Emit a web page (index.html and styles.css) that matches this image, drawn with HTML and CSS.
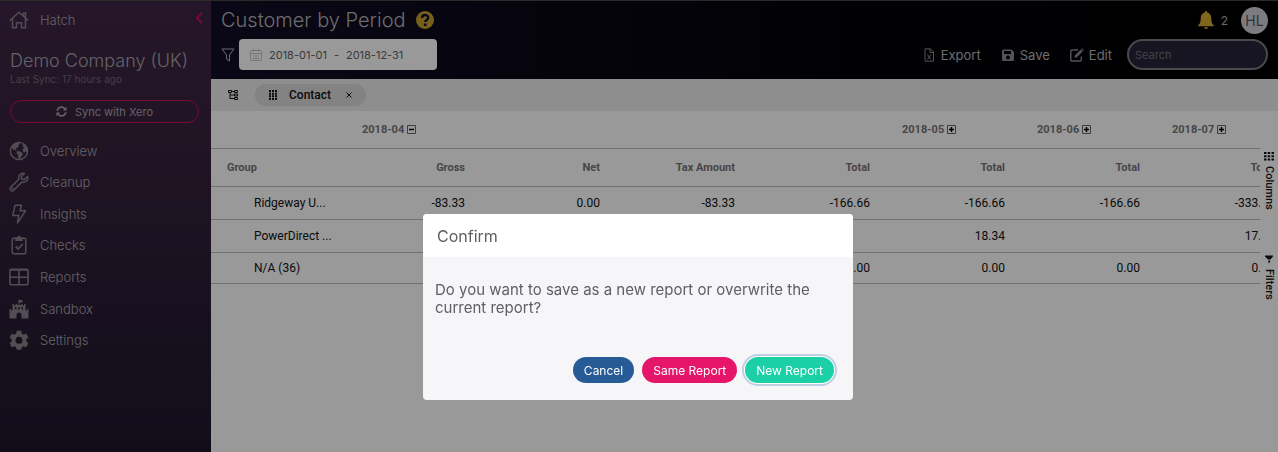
FILE: index.html
```html
<!DOCTYPE html>
<html lang="en">
<head>
<meta charset="utf-8">
<title>Customer by Period</title>
<link rel="stylesheet" href="styles.css">
</head>
<body>
<div class="app">
  <aside class="sidebar">
    <div class="brand">
      <a class="nav-link" href="#">
        <svg class="nav-icon" viewBox="0 0 20 18" fill="none" stroke="currentColor" stroke-width="1.5"><path d="M.8 9.5 10 1.2l9.2 8.3M3.5 7.5v9.3h4v-5h5v5h4V7.500M14.500 4.500V2h2v4.500"/></svg>
        <span>Hatch</span>
      </a>
      <button class="collapse" aria-label="Collapse menu"><svg viewBox="0 0 8 12" fill="none" stroke="currentColor" stroke-width="2"><path d="M6.800 1 2 6l4.800 5"/></svg></button>
    </div>
    <div class="company">
      <h2>Demo Company (UK)</h2>
      <p>Last Sync: 17 hours ago</p>
      <button class="sync"><svg viewBox="0 0 12 12" fill="none" stroke="currentColor" stroke-width="1.800"><path d="M1.300 5A4.700 4.700 0 0 1 9.600 3M10.700 7A4.700 4.700 0 0 1 2.400 9"/><path d="M11.500.8v4h-4zM.5 11.200v-4h4z" fill="currentColor" stroke="none"/></svg>Sync with Xero</button>
    </div>
    <nav class="nav">
      <a class="nav-link" href="#"><svg class="nav-icon" viewBox="0 0 20 20"><circle cx="10" cy="10" r="8.600" fill="none" stroke="currentColor" stroke-width="1.400"/><path fill="currentColor" d="M3 5 6 2l5-.8-.5 2.300-1.500 1 .8 1.200L7.500 7 6 8l2 .8-1 .7-2.500-1L2 6.500zM8 10l3.500.4 2.500 2-1.500 3-2 2.600-1.200-.5-.4-3.500L7.500 12zM13 3l3 1.500L18.500 8l-.5 3-2-.5-.8 1.500-1.700-2.500.5-2 1.500-1-1.500-1z"/></svg><span>Overview</span></a>
      <a class="nav-link" href="#"><svg class="nav-icon" viewBox="0 0 20 20" fill="none" stroke="currentColor" stroke-width="1.500" stroke-linejoin="round"><path d="M18.500 4.500 15.500 7.500 12.700 7.200 12.400 4.500 15.400 1.500C12.500.5 9 3 9.800 7.300L1.700 15.200C0 17.500 2.700 20 4.800 18.300L12.700 10.200C17 11 19.700 7.500 18.500 4.500Z"/><circle cx="3.700" cy="16.400" r=".4"/></svg><span>Cleanup</span></a>
      <a class="nav-link" href="#"><svg class="nav-icon" viewBox="0 0 20 20" fill="none" stroke="currentColor" stroke-width="1.500" stroke-linejoin="round"><path d="M6 1.200h6.500L11 6.800h5.500L8.500 18.800 9.800 11.500H3.800z"/></svg><span>Insights</span></a>
      <a class="nav-link" href="#"><svg class="nav-icon" viewBox="0 0 20 20" fill="none" stroke="currentColor" stroke-width="1.500"><rect x="3.200" y="3.200" width="13.600" height="15.600" rx="1.500"/><path d="m6.700 11.500 2.500 2.500 4.500-5" stroke-width="1.800"/><path d="M6.300 2.500h2A1.700 1.700 0 0 1 11.700 2.500h2V6H6.300z" fill="currentColor" stroke="none"/></svg><span>Checks</span></a>
      <a class="nav-link" href="#"><svg class="nav-icon" viewBox="0 0 20 20" fill="none" stroke="currentColor" stroke-width="1.600"><rect x=".9" y="2.200" width="18.200" height="15.600" rx="1.500"/><path d="M1 3h18M1 10.300h18M10 3v14.500"/></svg><span>Reports</span></a>
      <a class="nav-link" href="#"><svg class="nav-icon" viewBox="0 0 20 20" fill="currentColor"><path fill-rule="evenodd" d="M9.400.5H10V1h3.500v2.500H10.300V6H12V5h1.500v1.500H15V5h1.500v6.500H18V10h1.500v9.500h-7V16a2.500 2.500 0 0 0-5 0v3.500h-7V10H2v1.500h1.500V5H5v1.500h1.500V5H8v1h1.400zM6 8v2.500h1.400V8zM12.600 8v2.500H14V8zM9.300 8v2.500h1.400V8z"/></svg><span>Sandbox</span></a>
      <a class="nav-link" href="#"><svg class="nav-icon" viewBox="0 0 24 24" fill="currentColor"><path fill-rule="evenodd" d="M9.300 1h5.400l.7 3.400 1.900 1.100 3.300-1.100 2.700 4.700L20.700 11.400v2.200l2.600 2.300-2.700 4.700-3.300-1.100-1.900 1.100-.7 3.200H9.300l-.7-3.200-1.900-1.100-3.300 1.100L.7 15.900l2.600-2.300v-2.200L.7 9.100l2.700-4.700 3.300 1.100 1.900-1.100zM12 8.200a4.200 4.200 0 1 0 0 8.400 4.200 4.200 0 0 0 0-8.400z"/></svg><span>Settings</span></a>
    </nav>
  </aside>

  <main class="main">
    <header class="header">
      <div class="title-row">
        <h1>Customer by Period</h1>
        <button class="help" aria-label="Help"><svg viewBox="0 0 18 18"><circle cx="9" cy="9" r="9" fill="currentColor"/><path d="M6 7c0-4 6.200-4 6.200-.3C12.200 9 9.200 9 9.200 11" fill="none" stroke="#120e26" stroke-width="2.400"/><circle cx="9.200" cy="13.700" r="1.500" fill="#120e26"/></svg></button>
        <div class="account">
          <svg class="bell" viewBox="0 0 16 18" fill="currentColor"><path d="M8 0a1.200 1.200 0 0 1 1.200 1.400C12 2 13.300 4.200 13.300 7c0 4.500 1 6 2.700 7.500v.8H0v-.8C1.700 13 2.700 11.500 2.700 7c0-2.800 1.300-5 4.100-5.600A1.200 1.200 0 0 1 8 0zM6 16.300h4a2 1.700 0 0 1-4 0z"/></svg>
          <span class="count">2</span>
          <span class="avatar">HL</span>
        </div>
      </div>
      <div class="tool-row">
        <svg class="funnel" viewBox="0 0 14 14" fill="none" stroke="currentColor"><path d="M1 1h12L8.500 7v6l-3-2V7z"/></svg>
        <button class="dates"><svg viewBox="0 0 12 12" fill="none" stroke="currentColor"><rect x=".5" y="1.500" width="11" height="10" rx="1"/><path d="M.5 4.500h11M3.500 0v2.500M8.500 0v2.500M3 7h6M3 9.500h6" /></svg><span>2018-01-01</span><span>-</span><span>2018-12-31</span></button>
        <div class="actions">
          <button class="action"><svg viewBox="0 0 14 14" fill="none" stroke="currentColor"><path d="M3 .8h5.500L11.500 4v9.200H3zM8 1v3.500h3.500M5.500 6.500l3.300 5M8.800 6.500l-3.300 5"/></svg>Export</button>
          <button class="action"><svg viewBox="0 0 14 14" fill="currentColor"><path fill-rule="evenodd" d="M2.500 1.500h8l2.500 2.500v7.500a1.500 1.500 0 0 1-1.500 1.500h-9A1.500 1.500 0 0 1 1 11.500V3a1.500 1.500 0 0 1 1.500-1.500zM3 3v3h7V3zM7 7.500a2 2 0 1 0 0 4 2 2 0 0 0 0-4z"/></svg>Save</button>
          <button class="action"><svg viewBox="0 0 14 14" fill="none" stroke="currentColor" stroke-width="1.400"><path d="M8 2H1.800A1 1 0 0 0 .8 3v9a1 1 0 0 0 1 1h8.500a1 1 0 0 0 1-1V8.500"/><path d="m5 7.200 5.700-5.700 2 2L7 9.200l-2.500.5zM11.200 1 12 .2l2 2-.8.8z" fill="currentColor" stroke="none"/></svg>Edit</button>
          <input class="search" type="search" placeholder="Search" aria-label="Search">
        </div>
      </div>
    </header>

    <div class="grid">
      <div class="group-bar">
        <svg class="tree" viewBox="0 0 10 10" fill="none" stroke="currentColor"><path d="M.5.5h3v2h-3zM6.500.5h3v2h-3zM6.500 4h3v2h-3zM6.500 7.500h3v2h-3zM2 2.500v6h4.500M2 5h4.500M3.500 1.500h3"/></svg>
        <div class="chip">
          <svg class="grip" viewBox="0 0 8 10" fill="currentColor"><path d="M0 0h2v2H0zM3 0h2v2H3zM6 0h2v2H6zM0 2.700h2v2H0zM3 2.700h2v2H3zM6 2.700h2v2H6zM0 5.300h2v2H0zM3 5.300h2v2H3zM6 5.300h2v2H6zM0 8h2v2H0zM3 8h2v2H3zM6 8h2v2H6z"/></svg>
          <span>Contact</span>
          <button class="remove" aria-label="Remove Contact"><svg viewBox="0 0 6 6" stroke="currentColor"><path d="m.5.5 5 5m0-5-5 5"/></svg></button>
        </div>
      </div>
      <div class="grid-body">
        <div class="table-wrap">
          <table>
            <thead>
              <tr class="months">
                <th></th>
                <th colspan="4">2018-04 <button class="toggle" aria-label="Collapse 2018-04"><svg viewBox="0 0 9 9"><path d="M.5.5h8v8h-8z" fill="none" stroke="currentColor"/><path d="M2 4.500h5" stroke="#000" stroke-width="1.500"/></svg></button></th>
                <th>2018-05 <button class="toggle" aria-label="Expand 2018-05"><svg viewBox="0 0 9 9"><path d="M.5.5h8v8h-8z" fill="none" stroke="currentColor"/><path d="M2 4.500h5M4.500 2v5" stroke="#000" stroke-width="1.500"/></svg></button></th>
                <th>2018-06 <button class="toggle" aria-label="Expand 2018-06"><svg viewBox="0 0 9 9"><path d="M.5.5h8v8h-8z" fill="none" stroke="currentColor"/><path d="M2 4.500h5M4.500 2v5" stroke="#000" stroke-width="1.500"/></svg></button></th>
                <th>2018-07 <button class="toggle" aria-label="Expand 2018-07"><svg viewBox="0 0 9 9"><path d="M.5.5h8v8h-8z" fill="none" stroke="currentColor"/><path d="M2 4.500h5M4.500 2v5" stroke="#000" stroke-width="1.500"/></svg></button></th>
              </tr>
              <tr class="fields"><th>Group</th><th>Gross</th><th>Net</th><th>Tax Amount</th><th>Total</th><th>Total</th><th>Total</th><th>Total</th></tr>
            </thead>
            <tbody>
              <tr><td>Ridgeway U...</td><td>-83.33</td><td>0.00</td><td>-83.33</td><td>-166.66</td><td>-166.66</td><td>-166.66</td><td>-333.32</td></tr>
              <tr><td>PowerDirect ...</td><td></td><td></td><td></td><td></td><td>18.34</td><td></td><td>17.47</td></tr>
              <tr><td>N/A (36)</td><td>0.00</td><td>0.00</td><td>0.00</td><td>0.00</td><td>0.00</td><td>0.00</td><td>0.00</td></tr>
            </tbody>
          </table>
        </div>
        <div class="side-tabs">
          <button class="side-tab"><svg viewBox="0 0 10 10" fill="currentColor"><path d="M0 1h2.500v2H0zM3.700 1h2.500v2H3.700zM7.500 1H10v2H7.500zM0 4.200h2.500v2H0zM3.700 4.200h2.500v2H3.700zM7.500 4.200H10v2H7.500zM0 7.500h2.500v2H0zM3.700 7.500h2.500v2H3.700zM7.500 7.500H10v2H7.500z"/></svg>Columns</button>
          <button class="side-tab"><svg viewBox="0 0 10 10" fill="currentColor"><path d="M1 1.500h8v1L6.300 5.500H4L1 2.500zM4.300 6.500h1.800v1.700L4.300 9z"/></svg>Filters</button>
        </div>
      </div>
    </div>
  </main>
</div>

<div class="backdrop">
  <section class="dialog" role="dialog" aria-modal="true" aria-labelledby="dialog-title">
    <h2 class="dialog-title" id="dialog-title">Confirm</h2>
    <div class="dialog-body">
      <p>Do you want to save as a new report or overwrite the current report?</p>
      <div class="dialog-actions">
        <button class="btn btn-cancel">Cancel</button>
        <button class="btn btn-same">Same Report</button>
        <button class="btn btn-new">New Report</button>
      </div>
    </div>
  </section>
</div>
</body>
</html>
```

FILE: styles.css
```css
* { box-sizing: border-box; }

body {
  margin: 0;
  font-family: Inter, "Open Sans", sans-serif;
  font-size: 13px;
  background: #fff;
}

h1, h2, p { margin: 0; font-weight: 300; }

button {
  margin: 0;
  padding: 0;
  border: 0;
  background: none;
  color: inherit;
  font: inherit;
  cursor: pointer;
}

svg { display: block; flex: none; }

.app {
  display: flex;
  min-height: 100vh;
  border-top: 1px solid #464646;
}

/* Sidebar */
.sidebar {
  flex: none;
  width: 211px;
  color: #a9a5ab;
  background: linear-gradient(#3e2745, #34213a 42%, #1c172b);
}

.brand {
  display: flex;
  justify-content: space-between;
  align-items: center;
  height: 38px;
  padding: 0 8px 0 0;
}

.collapse { color: #c80f55; padding-bottom: 4px; }
.collapse svg { width: 8px; height: 12px; }

.nav-link {
  display: flex;
  align-items: center;
  gap: 11px;
  padding-left: 9px;
  color: inherit;
  font-weight: 300;
  text-decoration: none;
}

.nav-icon { width: 20px; height: 20px; color: #87818b; }

.company { padding: 11px 12px 0 10px; }
.company h2 { font-size: 18px; line-height: 22px; }
.company p { font-size: 10px; line-height: 14px; color: #75677a; font-weight: 400; }

.sync {
  display: flex;
  align-items: center;
  justify-content: center;
  gap: 8px;
  width: 100%;
  height: 23px;
  margin-top: 14px;
  border: 1px solid #c80f55;
  border-radius: 12px;
  font-size: 11px;
}
.sync svg { width: 11px; height: 11px; }

.nav {
  display: grid;
  grid-auto-rows: 1fr;
  height: 221px;
  margin-top: 12px;
}

/* Header */
.main {
  flex: 1;
  min-width: 0;
  display: flex;
  flex-direction: column;
}

.header {
  height: 78px;
  padding: 0 10px;
  color: #b5b5b8;
  background: linear-gradient(90deg, #120e26, #03030a 55%, #000);
}

.title-row { display: flex; align-items: center; height: 38px; }
.title-row h1 { font-size: 20px; line-height: 24px; }
.help { margin-left: 10px; color: #c9a02f; }
.help svg { width: 18px; height: 18px; }

.account {
  display: flex;
  align-items: center;
  margin-left: auto;
  font-size: 12px;
}
.bell { width: 16px; height: 18px; color: #d6ac34; }
.count { margin: 0 13px 0 7px; }
.avatar {
  width: 27px;
  height: 27px;
  border-radius: 50%;
  background: #cfcfd3;
  color: #55555c;
  font-size: 14px;
  line-height: 27px;
  text-align: center;
}

.tool-row { display: flex; align-items: center; }
.funnel { width: 14px; height: 14px; color: #b5b5b8; }

.dates {
  display: flex;
  align-items: center;
  gap: 7px;
  width: 198px;
  height: 31px;
  margin-left: 4px;
  padding-left: 11px;
  border-radius: 4px;
  background: #fff;
  color: #606266;
  font-size: 11px;
}
.dates svg { width: 12px; height: 12px; color: #c0c4cc; }

.actions {
  display: flex;
  align-items: center;
  gap: 20px;
  margin-left: auto;
}
.action {
  display: flex;
  align-items: center;
  gap: 5px;
  font-size: 13px;
}
.action svg { width: 14px; height: 14px; color: #8a8a8e; }
.action:nth-of-type(3) { margin-right: -5px; }

.search {
  width: 141px;
  height: 31px;
  padding: 0 6px;
  border: 2px solid #7b7b80;
  border-radius: 16px;
  background: #27243a;
  color: #b5b5b8;
  font: 11px Inter, sans-serif;
}
.search::placeholder { color: #6f6e77; opacity: 1; }

/* Pivot grid */
.grid {
  flex: 1;
  display: flex;
  flex-direction: column;
  font-family: Roboto, sans-serif;
  font-size: 12px;
  color: #111;
}

.group-bar {
  display: flex;
  align-items: center;
  gap: 17px;
  height: 32px;
  padding-left: 17px;
  background: #ededed;
}
.tree { width: 10px; height: 10px; }
.chip {
  display: flex;
  align-items: center;
  width: 111px;
  height: 22px;
  padding: 0 14px;
  border-radius: 11px;
  background: #dadada;
  font-weight: 500;
}
.grip { width: 8px; height: 10px; margin-right: 12px; }
.remove { margin-left: auto; }
.remove svg { width: 6px; height: 6px; }

.grid-body { flex: 1; display: flex; }
.table-wrap { flex: 1; min-width: 0; overflow: hidden; }

table {
  width: 1080px;
  table-layout: fixed;
  border-collapse: separate;
  border-spacing: 0;
}
th, td {
  height: 33px;
  padding: 0 16px;
  border-bottom: 1px solid #bdbdc2;
  text-align: right;
  white-space: nowrap;
}
th {
  height: 38px;
  color: #757575;
  font-size: 11px;
  font-weight: 700;
}
tbody tr:last-child td { height: 31px; }
.months th { text-align: left; }
.fields th:first-child { text-align: left; }
td:first-child { padding: 0 0 0 43px; text-align: left; }

.toggle { vertical-align: -1px; color: #666; }
.toggle svg { width: 9px; height: 9px; }

.side-tabs {
  flex: none;
  display: flex;
  flex-direction: column;
  gap: 44px;
  width: 18px;
  padding-top: 40px;
}
.side-tab {
  display: flex;
  align-items: center;
  gap: 5px;
  writing-mode: vertical-rl;
  font-size: 11px;
  font-weight: 500;
}
.side-tab svg { width: 10px; height: 10px; }

/* Confirm dialog */
.backdrop {
  position: fixed;
  inset: 0;
  display: flex;
  justify-content: center;
  align-items: flex-start;
  padding: 214px 2px 0 0;
  background: rgba(0, 0, 0, 0.4);
}

.dialog {
  width: 430px;
  border-radius: 4px;
  overflow: hidden;
  background: #f6f6f9;
  color: #5e5f63;
}
.dialog-title {
  padding: 12px 14px 11px;
  background: #fff;
  font-size: 16px;
  line-height: 20px;
  font-weight: 400;
}
.dialog-body { padding: 24px 19px 17px 12px; }
.dialog-body p { font-size: 15px; line-height: 18px; font-weight: 400; }
.dialog-actions {
  display: flex;
  justify-content: flex-end;
  gap: 8px;
  margin-top: 40px;
}
.btn {
  height: 26px;
  padding: 0 11px;
  border-radius: 13px;
  color: #fff;
  font-size: 12px;
}
.btn-cancel { background: #275b96; }
.btn-same { background: #e51569; }
.btn-new { background: #1bcfa7; box-shadow: 0 0 0 1px #fff, 0 0 0 3px #bdcfe2; }
```
